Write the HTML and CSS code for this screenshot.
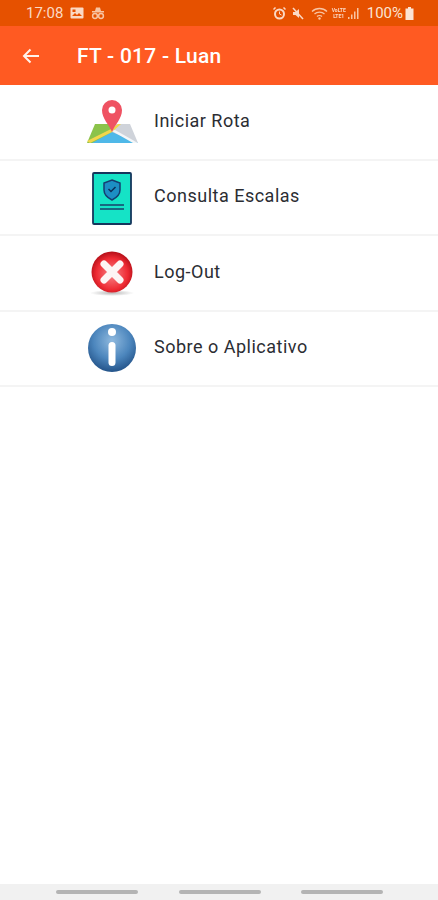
FILE: index.html
```html
<!doctype html>
<html lang="en">
<head>
  <meta charset="UTF-8">
  <title>FT - 017 - Luan</title>
  <link rel="stylesheet" href="styles.css">
</head>
<body>
<div class="container">
  <div class="status">
    <div class="status-left">
      <span>17:08</span>
      <svg width="14" height="12" viewBox="0 0 14 12"><rect x="0.5" y="0.5" width="13" height="11" rx="1" fill="#fbd9c4"/><path d="M2 9l3-3 2 2 2-2 3 3z" fill="#e65100"/><rect x="2.5" y="2.5" width="3" height="2.5" fill="#e65100"/></svg>
      <svg width="14" height="14" viewBox="0 0 14 14"><path d="M4 5l1-3.5h4l1 3.500z" fill="#f8c4a2"/><rect x="1" y="5" width="12" height="1.500" fill="#f8c4a2"/><circle cx="4" cy="10" r="2.400" fill="none" stroke="#f8c4a2" stroke-width="1.500"/><circle cx="10" cy="10" r="2.400" fill="none" stroke="#f8c4a2" stroke-width="1.500"/></svg>
    </div>
    <div class="status-right">
      <svg width="13" height="13" viewBox="0 0 13 13"><circle cx="6.500" cy="7" r="4.500" fill="none" stroke="#fbd9c4" stroke-width="2"/><path d="M6.500 4.500V7l2 1" fill="none" stroke="#fbd9c4"/><path d="M0.500 2.500l2-2M12.500 2.500l-2-2" stroke="#fbd9c4" stroke-width="1.500"/></svg>
      <svg class="gap-mute" width="12" height="13" viewBox="0 0 12 13"><path d="M1 5h2.500L7 2v9L3.500 8H1z" fill="#fbd9c4"/><path d="M1 1l10 11" stroke="#fbd9c4" stroke-width="1.500"/></svg>
      <svg class="gap-wifi" width="17" height="13" viewBox="0 0 17 13"><path d="M1 4.500c4-4 11-4 15 0M3.500 7c2.500-2.500 7.500-2.500 10 0M6 9.500c1.300-1.300 3.700-1.300 5 0" fill="none" stroke="#f8c4a2" stroke-width="1.300"/><circle cx="8.500" cy="11.500" r="1.200" fill="#f8c4a2"/></svg>
      <span class="lte">VoLTE<br>LTE1</span>
      <svg width="11" height="12" viewBox="0 0 11 12"><path d="M0 10h1.500v2H0zM3 7.500h1.500V12H3zM6 4.500h1.500V12H6zM9 1h1.500v11H9z" fill="#f8c4a2"/></svg>
      <span class="battery-text">100%</span>
      <svg width="9" height="13" viewBox="0 0 9 13"><path d="M3 0h3v1.500h2.500V13H.5V1.500H3z" fill="#fbe3d3"/></svg>
    </div>
  </div>
  <div class="toolbar">
    <svg class="back" width="18" height="16" viewBox="0 0 18 16"><path d="M17 8H2M8.500 1.500L2 8l6.500 6.500" fill="none" stroke="#fff3ec" stroke-width="2"/></svg>
    <h1>FT - 017 - Luan</h1>
  </div>
  <ul class="menu">
    <li class="menu-item">
      <div class="menu-icon">
        <svg width="52" height="48" viewBox="0 0 52 48">
          <path d="M9 26h16l2 19H1z" fill="#8bc34a"/>
          <path d="M25 26h19l8 19H27z" fill="#cfd3da"/>
          <path d="M6 45l20-11 26 11z" fill="#4fb8e8"/>
          <path d="M1 43l24-12 7-5h3l-9 8L4 45z" fill="#f2d64b"/>
          <path d="M26 33l3-1 23 13h-5z" fill="#f4f6f8"/>
          <path d="M26 34c-3-8-10-13-10-22a10 10 0 0 1 20 0c0 9-7 14-10 22z" fill="#ef5262"/>
          <circle cx="26" cy="12" r="3.500" fill="#fff"/>
        </svg>
      </div>
      <span>Iniciar Rota</span>
    </li>
    <li class="menu-item">
      <div class="menu-icon">
        <svg class="icon-doc" width="42" height="54" viewBox="0 0 42 54">
          <rect x="2" y="1" width="38" height="51" fill="#15e3c6" stroke="#15365c" stroke-width="1.800" rx="1"/>
          <path d="M21 8l8 3v7c0 5-4 8-8 10-4-2-8-5-8-10v-7z" fill="#1c8fc4" stroke="#153e70" stroke-width="1.500"/>
          <path d="M17.500 17l2.500 2.500 4.500-4.500" fill="none" stroke="#0c2f58" stroke-width="1.500"/>
          <path d="M9 33h24M9 37h24" stroke="#18416b" stroke-width="1.500"/>
        </svg>
      </div>
      <span>Consulta Escalas</span>
    </li>
    <li class="menu-item">
      <div class="menu-icon">
        <svg class="icon-x" width="46" height="48" viewBox="0 0 46 48">
          <defs>
            <radialGradient id="redBall" cx="0.500" cy="0.550" r="0.550">
              <stop offset="0" stop-color="#f8868a"/>
              <stop offset="0.700" stop-color="#ee2a33"/>
              <stop offset="1" stop-color="#b40f18"/>
            </radialGradient>
            <radialGradient id="shade" cx="0.500" cy="0.500" r="0.500">
              <stop offset="0" stop-color="#999" stop-opacity="0.700"/>
              <stop offset="1" stop-color="#999" stop-opacity="0"/>
            </radialGradient>
          </defs>
          <ellipse cx="23" cy="43" rx="22" ry="3" fill="url(#shade)"/>
          <circle cx="23" cy="22" r="20.500" fill="url(#redBall)"/>
          <path d="M15 14l8 8m0 0l8-8m-8 8l-8 8m8-8l8 8" stroke="#fdf4f4" stroke-width="7" stroke-linecap="round"/>
        </svg>
      </div>
      <span>Log-Out</span>
    </li>
    <li class="menu-item">
      <div class="menu-icon">
        <svg width="48" height="48" viewBox="0 0 48 48">
          <defs>
            <radialGradient id="blueBall" cx="0.500" cy="0.350" r="0.700">
              <stop offset="0" stop-color="#8fb9de"/>
              <stop offset="0.550" stop-color="#4c86bd"/>
              <stop offset="1" stop-color="#1c4a80"/>
            </radialGradient>
          </defs>
          <circle cx="24" cy="24" r="24" fill="url(#blueBall)"/>
          <circle cx="24" cy="8" r="4" fill="#fff"/>
          <rect x="20.500" y="18" width="7" height="24" rx="3.500" fill="#fff"/>
        </svg>
      </div>
      <span>Sobre o Aplicativo</span>
    </li>
  </ul>
  <div class="spacer"></div>
  <div class="nav">
    <div class="nav-line"></div>
    <div class="nav-line"></div>
    <div class="nav-line"></div>
  </div>
</div>
</body>
</html>
```

FILE: styles.css
```css
* {
  box-sizing: border-box;
}
html, body {
  height: 100%;
}
body {
  margin: 0;
  background-color: #fff;
  font-family: Roboto, "Liberation Sans", sans-serif;
}
.container {
  height: 900px;
  display: flex;
  flex-direction: column;
  overflow: hidden;
}
.status {
  height: 26px;
  padding: 0 24px 0 26px;
  display: flex;
  justify-content: space-between;
  align-items: center;
  background-color: #e65100;
  color: #fbd9c4;
  font-size: 15px;
}
.status-left {
  display: flex;
  align-items: center;
  gap: 7px;
}
.status-right {
  display: flex;
  align-items: center;
  gap: 2px;
}
.status svg, .lte, .menu-icon svg {
  filter: blur(0.5px);
}
.gap-mute {
  margin-left: 4px;
}
.gap-wifi {
  margin-left: 5px;
}
.lte {
  font-size: 5px;
  line-height: 6px;
  text-align: center;
  font-weight: 700;
  margin-left: 2px;
}
.battery-text {
  margin-left: 6px;
  color: #fbe3d3;
}
.toolbar {
  height: 59px;
  flex-shrink: 0;
  padding: 0 22px;
  display: flex;
  align-items: center;
  background-color: #ff5a22;
  color: #fff;
}
.back {
  margin-right: 37px;
}
.toolbar h1 {
  margin: 0;
  font-size: 21px;
  font-weight: 500;
  letter-spacing: 0.25px;
}
.menu {
  margin: 0;
  padding: 0;
  list-style: none;
}
.menu-item {
  height: 75.500px;
  padding-left: 84px;
  display: flex;
  align-items: center;
  border-bottom: 2px solid #f4f4f4;
  color: #2b2d33;
  font-size: 18px;
  letter-spacing: 0.5px;
}
.menu-item span {
  margin-bottom: 3px;
}
.menu-icon {
  width: 56px;
  margin-right: 14px;
  display: flex;
  justify-content: center;
  align-items: center;
}
.icon-doc {
  margin-top: 3px;
}
.icon-x {
  margin-top: 2px;
}
.spacer {
  flex: 1;
}
.nav {
  height: 16px;
  padding: 0 55px 0 56px;
  display: flex;
  align-items: center;
  justify-content: space-between;
  background-color: #f1f1f1;
}
.nav-line {
  width: 82px;
  height: 4px;
  border-radius: 2px;
  background-color: #b4b4b4;
}
```
